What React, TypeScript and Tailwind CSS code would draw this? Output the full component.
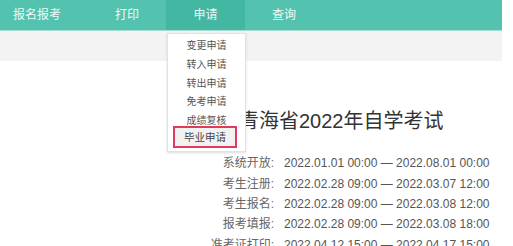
export default function App() {
  const menu = ['变更申请', '转入申请', '转出申请', '免考申请', '成绩复核']
  const rows = [
    ['系统开放:', '2022.01.01 00:00 — 2022.08.01 00:00'],
    ['考生注册:', '2022.02.28 09:00 — 2022.03.07 12:00'],
    ['考生报名:', '2022.02.28 09:00 — 2022.03.08 12:00'],
    ['报考填报:', '2022.02.28 09:00 — 2022.03.08 18:00'],
    ['准考证打印:', '2022.04.12 15:00 — 2022.04.17 15:00'],
  ]

  return (
    <div className="relative w-[513px] h-[246px] overflow-hidden bg-white font-['Liberation_Sans','Noto_Sans_CJK_SC',sans-serif]">
      {/* top nav */}
      <div className="flex h-[30px] w-[502px] bg-[#53c2ae] text-[12px] text-white/90">
        <div className="flex w-[87px] items-center pl-[13px]">报名报考</div>
        <div className="flex w-[79px] items-center pl-[28px]">打印</div>
        <div className="flex w-[79px] items-center justify-center bg-[#44b7a2]">申请</div>
        <div className="flex w-[79px] items-center pl-[27px]">查询</div>
      </div>
      <div className="h-px w-[502px] bg-[#a6dcd2]" />
      <div className="h-[30px] w-[502px] bg-[#f3f3f3]" />

      {/* title */}
      <div className="mt-[46px] pl-[239px] text-[20px] leading-[28px] text-[#333]">青海省2022年自学考试</div>

      {/* schedule */}
      <div className="mt-[18px] flex flex-col">
        {rows.map(([label, value]) => (
          <div key={label} className="flex h-[20.4px] items-center text-[12px]">
            <span className="w-[274px] text-right text-[#666]">{label}</span>
            <span className="ml-[10px] text-[#555]">{value}</span>
          </div>
        ))}
      </div>

      {/* dropdown */}
      <div className="absolute left-[167px] top-[33px] h-[119px] w-[79px] border border-[#e2e2e2] bg-white pt-[2.7px] shadow-sm">
        {menu.map((m) => (
          <div key={m} className="flex h-[18.6px] items-center justify-center text-[10px] text-[#555]">
            {m}
          </div>
        ))}
        <div className="-mt-[4px] ml-[5px] flex h-[22px] w-[64px] items-center justify-center border-2 border-[#e23a5c] bg-[#f2f2f2] pt-[3px] text-[10.5px] text-[#444]">
          毕业申请
        </div>
      </div>
    </div>
  )
}
